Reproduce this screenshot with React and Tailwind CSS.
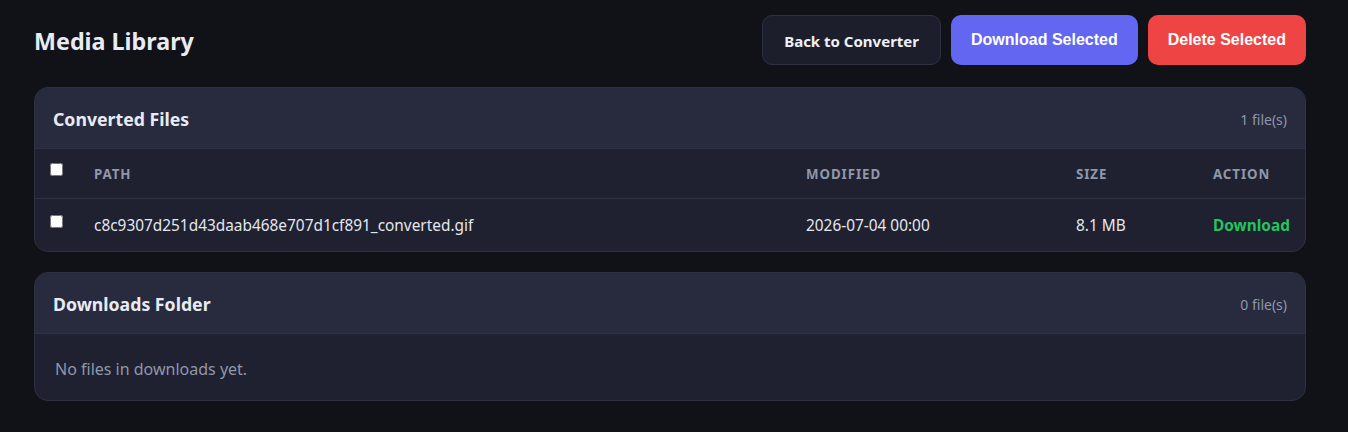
import { useState } from 'react'

const files = [
  {
    id: 1,
    path: 'c8c9307d251d43daab468e707d1cf891_converted.gif',
    modified: '2026-07-04 00:00',
    size: '8.1 MB',
  },
]

const cols = 'grid grid-cols-[43px_712px_270px_137px_108px] items-center'

function Card({ title, count, children }) {
  return (
    <div className="rounded-[14px] border border-[#2e3144] bg-[#1f2130] overflow-hidden">
      <div className="flex items-center justify-between h-[61px] px-[18px] pt-[3px] bg-[#282b3d] border-b border-[#2e3144]">
        <h2 className="text-[17.7px] font-bold text-[#e8ebf4]">{title}</h2>
        <span className="text-[14px] text-[#8f97ab]">{count} file(s)</span>
      </div>
      {children}
    </div>
  )
}

export default function App() {
  const [selected, setSelected] = useState([])

  const toggle = (id) => {
    setSelected(selected.includes(id) ? selected.filter(s => s !== id) : [...selected, id])
  }

  return (
    <div className="min-h-[432px] bg-[#111218] px-[34px] pt-[15px] pb-8 font-['Noto_Sans',sans-serif]">
      <div className="max-w-[1272px]">
        {/* header */}
        <div className="flex items-center justify-between h-[50px] mb-[22px]">
          <h1 className="text-[23.3px] font-bold text-[#e8ebf4] pt-[2px]">Media Library</h1>
          <div className="flex gap-[10px]">
            <button className="h-[50px] px-[21px] pt-[2px] rounded-[10px] border border-[#2e3144] bg-[#1c1e2b] text-[15px] font-bold text-[#eef0f6]">
              Back to Converter
            </button>
            <button className="h-[50px] px-5 pb-[1px] rounded-[10px] bg-[#6366f1] text-[16px] font-bold text-white font-['Liberation_Sans',Arial,sans-serif]">
              Download Selected
            </button>
            <button className="h-[50px] px-5 pb-[1px] rounded-[10px] bg-[#ef4444] text-[16px] font-bold text-white font-['Liberation_Sans',Arial,sans-serif]">
              Delete Selected
            </button>
          </div>
        </div>

        <div className="flex flex-col gap-5">
          <Card title="Converted Files" count={files.length}>
            <div className={`${cols} h-[50px] border-b border-[#2e3144]`}>
              <div className="pl-[15px] flex">
                <input type="checkbox" className="w-[13px] h-[13px] mb-2" />
              </div>
              {['Path', 'Modified', 'Size', 'Action'].map(h => (
                <div key={h} className="px-4 pt-[2px] text-[13.3px] font-bold uppercase tracking-[0.07em] text-[#8f97ab]">
                  {h}
                </div>
              ))}
            </div>
            {files.map(f => (
              <div key={f.id} className={`${cols} h-[52px] pt-[2px] text-[15.4px] text-[#e4e7ef]`}>
                <div className="pl-[15px] flex">
                  <input
                    type="checkbox"
                    className="w-[13px] h-[13px] mb-[10px]"
                    checked={selected.includes(f.id)}
                    onChange={() => toggle(f.id)}
                  />
                </div>
                <div className="px-4">{f.path}</div>
                <div className="px-4">{f.modified}</div>
                <div className="px-4">{f.size}</div>
                <div className="px-4">
                  <a className="font-bold text-[#22c55e] cursor-pointer">Download</a>
                </div>
              </div>
            ))}
          </Card>

          <Card title="Downloads Folder" count={0}>
            <div className="h-[66px] flex items-center px-5 pt-[3px] text-[16px] text-[#8f97ab]">
              No files in downloads yet.
            </div>
          </Card>
        </div>
      </div>
    </div>
  )
}
